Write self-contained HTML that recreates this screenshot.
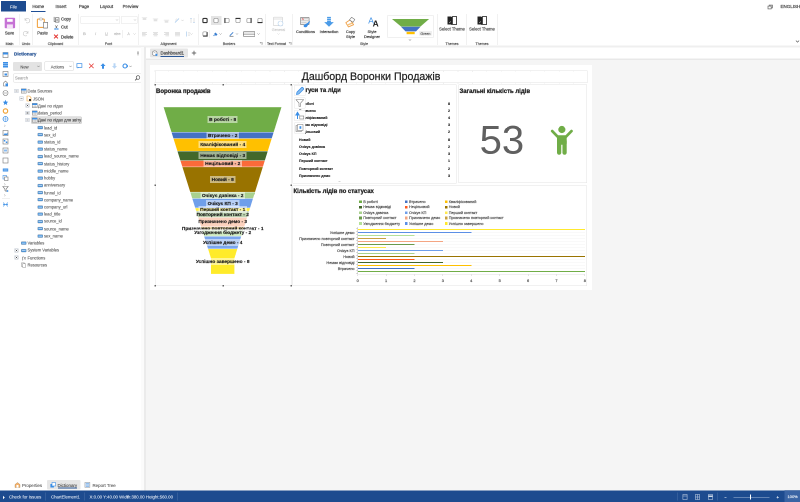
<!DOCTYPE html>
<html><head><meta charset="utf-8">
<style>
*{box-sizing:border-box;margin:0;padding:0}
html,body{width:800px;height:502px;overflow:hidden;background:#fff;font-family:"Liberation Sans",sans-serif;color:#333}
#root{position:absolute;left:0;top:0;width:1600px;height:1004px;transform:scale(0.5);transform-origin:0 0;will-change:transform;overflow:hidden}
.a{position:absolute}
.t{position:absolute;white-space:nowrap}
svg{overflow:visible}
</style></head><body><div id="root">
<div class="a" style="left:2px;top:2px;width:50px;height:21px;background:#1d4b8f;"></div>
<div class="t" style="left:-173px;width:400px;text-align:center;top:9px;font-size:8.6px;color:#fff;font-weight:400;-webkit-text-stroke:0.386px #fff;-webkit-text-stroke:0.1px #fff">File</div>
<div class="t" style="left:-123.6px;width:400px;text-align:center;top:8px;font-size:8.8px;color:#444;font-weight:400;-webkit-text-stroke:0.396px #444;">Home</div>
<div class="a" style="left:62px;top:22px;width:29.2px;height:2px;background:#1f4f96;"></div>
<div class="t" style="left:-78px;width:400px;text-align:center;top:8px;font-size:8.8px;color:#444;font-weight:400;-webkit-text-stroke:0.396px #444;">Insert</div>
<div class="t" style="left:-32px;width:400px;text-align:center;top:8px;font-size:8.8px;color:#444;font-weight:400;-webkit-text-stroke:0.396px #444;">Page</div>
<div class="t" style="left:13px;width:400px;text-align:center;top:8px;font-size:8.8px;color:#444;font-weight:400;-webkit-text-stroke:0.396px #444;">Layout</div>
<div class="t" style="left:61px;width:400px;text-align:center;top:8px;font-size:8.8px;color:#444;font-weight:400;-webkit-text-stroke:0.396px #444;">Preview</div>
<svg class="a" style="left:1535px;top:8.6px;width:12px;height:10px" viewBox="0 0 6 5"><rect x="0.5" y="1.6" width="3.2" height="2.8" fill="#fff" stroke="#666" stroke-width="0.7"/><path d="M1.7 1.4V0.6h3.2v2.8H3.9" fill="none" stroke="#666" stroke-width="0.7"/></svg>
<div class="t" style="left:1561px;top:8px;font-size:9px;color:#444;font-weight:400;-webkit-text-stroke:0.4px #444;">ENGLISH</div>
<div class="a" style="left:0px;top:91.4px;width:1600px;height:3.6px;background:#efefef;"></div>
<div class="a" style="left:39px;top:28px;width:1.2px;height:62px;background:#e2e2e2;"></div>
<div class="a" style="left:64px;top:28px;width:1.2px;height:62px;background:#e2e2e2;"></div>
<div class="a" style="left:156px;top:28px;width:1.2px;height:62px;background:#e2e2e2;"></div>
<div class="a" style="left:276px;top:28px;width:1.2px;height:62px;background:#e2e2e2;"></div>
<div class="a" style="left:396px;top:28px;width:1.2px;height:62px;background:#e2e2e2;"></div>
<div class="a" style="left:530px;top:28px;width:1.2px;height:62px;background:#e2e2e2;"></div>
<div class="a" style="left:585px;top:28px;width:1.2px;height:62px;background:#e2e2e2;"></div>
<div class="a" style="left:874px;top:28px;width:1.2px;height:62px;background:#e2e2e2;"></div>
<div class="a" style="left:933px;top:28px;width:1.2px;height:62px;background:#e2e2e2;"></div>
<div class="a" style="left:994px;top:28px;width:1.2px;height:62px;background:#e2e2e2;"></div>
<div class="t" style="left:-181px;width:400px;text-align:center;top:83px;font-size:7.2px;color:#555;font-weight:400;-webkit-text-stroke:0.324px #555;">Main</div>
<div class="t" style="left:-148px;width:400px;text-align:center;top:83px;font-size:7.2px;color:#555;font-weight:400;-webkit-text-stroke:0.324px #555;">Undo</div>
<div class="t" style="left:-89px;width:400px;text-align:center;top:83px;font-size:7.2px;color:#555;font-weight:400;-webkit-text-stroke:0.324px #555;">Clipboard</div>
<div class="t" style="left:17px;width:400px;text-align:center;top:83px;font-size:7.2px;color:#555;font-weight:400;-webkit-text-stroke:0.324px #555;">Font</div>
<div class="t" style="left:137px;width:400px;text-align:center;top:83px;font-size:7.2px;color:#555;font-weight:400;-webkit-text-stroke:0.324px #555;">Alignment</div>
<div class="t" style="left:258px;width:400px;text-align:center;top:83px;font-size:7.2px;color:#555;font-weight:400;-webkit-text-stroke:0.324px #555;">Borders</div>
<div class="t" style="left:353px;width:400px;text-align:center;top:83px;font-size:7.2px;color:#555;font-weight:400;-webkit-text-stroke:0.324px #555;">Text Format</div>
<div class="t" style="left:528px;width:400px;text-align:center;top:83px;font-size:7.2px;color:#555;font-weight:400;-webkit-text-stroke:0.324px #555;">Style</div>
<div class="t" style="left:704px;width:400px;text-align:center;top:83px;font-size:7.2px;color:#555;font-weight:400;-webkit-text-stroke:0.324px #555;">Themes</div>
<div class="t" style="left:764px;width:400px;text-align:center;top:83px;font-size:7.2px;color:#555;font-weight:400;-webkit-text-stroke:0.324px #555;">Themes</div>
<svg class="a" style="left:519px;top:84px;width:6px;height:6px" viewBox="0 0 3 3"><path d="M0.3 0.3h2.4v2.4M0.5 0.5l2 2" fill="none" stroke="#888" stroke-width="0.5"/></svg>
<svg class="a" style="left:577px;top:84px;width:6px;height:6px" viewBox="0 0 3 3"><path d="M0.3 0.3h2.4v2.4M0.5 0.5l2 2" fill="none" stroke="#888" stroke-width="0.5"/></svg>
<svg class="a" style="left:9px;top:35px;width:22px;height:22px" viewBox="0 0 11 11"><rect x="0.2" y="0.2" width="10.4" height="10.6" rx="0.9" fill="#c672d5"/><rect x="2.6" y="1.6" width="5.6" height="2.7" fill="#fff"/><rect x="2.4" y="6.5" width="6" height="4.3" fill="#f4e3f7"/><rect x="2.4" y="6.5" width="6" height="0.8" fill="#c672d5" opacity="0.5"/></svg>
<div class="t" style="left:-181px;width:400px;text-align:center;top:62px;font-size:8.2px;color:#444;font-weight:400;-webkit-text-stroke:0.368px #444;">Save</div>
<svg class="a" style="left:47px;top:34px;width:12px;height:12px" viewBox="0 0 6 6"><path d="M1.5 1v2.2h2.2M1.7 3.2A2.3 2.3 0 1 1 2.6 5.5" fill="none" stroke="#c7c7c7" stroke-width="0.6"/></svg>
<svg class="a" style="left:47px;top:60px;width:12px;height:12px" viewBox="0 0 6 6"><path d="M4.5 1v2.2H2.3M4.3 3.2A2.3 2.3 0 1 0 3.4 5.5" fill="none" stroke="#c7c7c7" stroke-width="0.6"/></svg>
<svg class="a" style="left:72px;top:34px;width:26px;height:24px" viewBox="0 0 13 12"><rect x="1.4" y="2.1" width="6.9" height="8.3" rx="0.8" fill="#fff" stroke="#f2a545" stroke-width="1.1"/><rect x="3.3" y="1" width="3.1" height="2" rx="0.6" fill="#fff" stroke="#888" stroke-width="0.5"/><rect x="7.4" y="5.3" width="4.3" height="5.8" rx="0.3" fill="#fff" stroke="#666" stroke-width="0.6"/></svg>
<div class="t" style="left:-115px;width:400px;text-align:center;top:62px;font-size:8.2px;color:#444;font-weight:400;-webkit-text-stroke:0.368px #444;">Paste</div>
<svg class="a" style="left:107px;top:32.6px;width:12px;height:12px" viewBox="0 0 6 6"><path d="M0.6 0.4v4.6h1.6" fill="none" stroke="#444" stroke-width="0.55"/><rect x="1.9" y="1.3" width="3.6" height="4.3" fill="#fff" stroke="#444" stroke-width="0.55"/><path d="M2.7 2.8h2M2.7 4.1h2" stroke="#444" stroke-width="0.4"/></svg>
<div class="t" style="left:122px;top:33px;font-size:8.6px;color:#444;font-weight:400;-webkit-text-stroke:0.386px #444;">Copy</div>
<svg class="a" style="left:108px;top:49.6px;width:10px;height:10px" viewBox="0 0 5 5"><path d="M1.2 0.3L3.2 3.3M3.6 0.3L1.6 3.3" stroke="#333" stroke-width="0.5"/><circle cx="1.3" cy="4" r="0.75" fill="none" stroke="#3a8ee6" stroke-width="0.55"/><circle cx="3.5" cy="4" r="0.75" fill="none" stroke="#3a8ee6" stroke-width="0.55"/></svg>
<div class="t" style="left:122px;top:49px;font-size:8.6px;color:#444;font-weight:400;-webkit-text-stroke:0.386px #444;">Cut</div>
<svg class="a" style="left:107px;top:67.6px;width:10px;height:10px" viewBox="0 0 5 5"><path d="M0.6 0.6l3.8 3.8M4.4 0.6l-3.8 3.8" stroke="#e53935" stroke-width="1.05"/></svg>
<div class="t" style="left:122px;top:69px;font-size:8.6px;color:#444;font-weight:400;-webkit-text-stroke:0.386px #444;">Delete</div>
<div class="a" style="left:161px;top:32px;width:79px;height:16px;background:#fff;border:1px solid #e3e3e3;border-radius:2px"></div>
<div class="a" style="left:242px;top:32px;width:33px;height:16px;background:#fff;border:1px solid #e3e3e3;border-radius:2px"></div>
<svg class="a" style="left:231px;top:38px;width:6px;height:4px" viewBox="0 0 3 2"><path d="M0.3 0.3l1.2 1.2l1.2-1.2" fill="none" stroke="#aaa" stroke-width="0.4"/></svg>
<svg class="a" style="left:267px;top:38px;width:6px;height:4px" viewBox="0 0 3 2"><path d="M0.3 0.3l1.2 1.2l1.2-1.2" fill="none" stroke="#aaa" stroke-width="0.4"/></svg>
<div class="t" style="left:-31px;width:400px;text-align:center;top:63px;font-size:8px;color:#c8c8c8;font-weight:400;-webkit-text-stroke:0.36px #c8c8c8;font-weight:700">B</div>
<div class="t" style="left:-9px;width:400px;text-align:center;top:63px;font-size:8px;color:#c8c8c8;font-weight:400;-webkit-text-stroke:0.36px #c8c8c8;font-style:italic">I</div>
<div class="t" style="left:13px;width:400px;text-align:center;top:63px;font-size:8px;color:#c8c8c8;font-weight:400;-webkit-text-stroke:0.36px #c8c8c8;text-decoration:underline">U</div>
<div class="t" style="left:34.6px;width:400px;text-align:center;top:63px;font-size:8px;color:#c8c8c8;font-weight:400;-webkit-text-stroke:0.36px #c8c8c8;text-decoration:line-through">abc</div>
<div class="t" style="left:57px;width:400px;text-align:center;top:63px;font-size:8px;color:#c8c8c8;font-weight:400;-webkit-text-stroke:0.36px #c8c8c8;">A</div>
<div class="a" style="left:245px;top:60px;width:1px;height:16px;background:#e3e3e3;"></div>
<svg class="a" style="left:266px;top:66px;width:6px;height:4px" viewBox="0 0 3 2"><path d="M0.3 0.3l1.2 1.2l1.2-1.2" fill="none" stroke="#bbb" stroke-width="0.4"/></svg>
<svg class="a" style="left:283px;top:35px;width:12px;height:11px" viewBox="0 0 6 5.5"><path d="M0.3 0.20000000000000007h5.4" stroke="#d0d0d0" stroke-width="0.4"/><path d="M1.2 1.2000000000000002h3.6M1.2 2.2h3.6" stroke="#c4c4c4" stroke-width="0.5"/></svg>
<svg class="a" style="left:305px;top:35px;width:12px;height:11px" viewBox="0 0 6 5.5"><path d="M0.3 1.4h5.4" stroke="#d0d0d0" stroke-width="0.4"/><path d="M1.2 2.4h3.6M1.2 3.4h3.6" stroke="#c4c4c4" stroke-width="0.5"/></svg>
<svg class="a" style="left:327px;top:35px;width:12px;height:11px" viewBox="0 0 6 5.5"><path d="M0.3 2.6h5.4" stroke="#d0d0d0" stroke-width="0.4"/><path d="M1.2 3.6h3.6M1.2 4.6h3.6" stroke="#c4c4c4" stroke-width="0.5"/></svg>
<svg class="a" style="left:283px;top:63px;width:12px;height:11px" viewBox="0 0 6 5.5"><path d="M0.5 0.8h5M0.5 2h3.6M0.5 3.2h5M0.5 4.4h3.6" stroke="#c4c4c4" stroke-width="0.5"/></svg>
<svg class="a" style="left:305px;top:63px;width:12px;height:11px" viewBox="0 0 6 5.5"><path d="M0.5 0.8h5M1.2 2h3.6M0.5 3.2h5M1.2 4.4h3.6" stroke="#c4c4c4" stroke-width="0.5"/></svg>
<svg class="a" style="left:327px;top:63px;width:12px;height:11px" viewBox="0 0 6 5.5"><path d="M0.5 0.8h5M1.9 2h3.6M0.5 3.2h5M1.9 4.4h3.6" stroke="#c4c4c4" stroke-width="0.5"/></svg>
<svg class="a" style="left:349px;top:63px;width:12px;height:11px" viewBox="0 0 6 5.5"><path d="M0.5 0.8h5M0.5 2h5M0.5 3.2h5M0.5 4.4h5" stroke="#c4c4c4" stroke-width="0.5"/></svg>
<svg class="a" style="left:349px;top:36px;width:10px;height:10px" viewBox="0 0 5 5"><path d="M0.5 4.5l4-4" stroke="#9cc3ea" stroke-width="0.7"/><path d="M0.6 2.5l2-2" stroke="#bbb" stroke-width="0.4"/></svg>
<svg class="a" style="left:362px;top:39px;width:6px;height:4px" viewBox="0 0 3 2"><path d="M0.3 0.3l1.2 1.2l1.2-1.2" fill="none" stroke="#bbb" stroke-width="0.4"/></svg>
<svg class="a" style="left:380px;top:35px;width:10px;height:12px" viewBox="0 0 5 6"><path d="M1 0.5v5M4 0.5v5" stroke="#c9c9c9" stroke-width="0.5"/><path d="M0.3 1.4L1 0.5l0.7 0.9M3.3 4.6L4 5.5l0.7-0.9" fill="none" stroke="#9cc3ea" stroke-width="0.5"/></svg>
<svg class="a" style="left:371px;top:62px;width:10px;height:12px" viewBox="0 0 5 6"><path d="M1 0.5v5" stroke="#9cc3ea" stroke-width="0.6"/><path d="M2.4 1.8h2.3M2.4 3h2.3M2.4 4.2h2.3" stroke="#c9c9c9" stroke-width="0.4"/></svg>
<svg class="a" style="left:380px;top:66px;width:6px;height:4px" viewBox="0 0 3 2"><path d="M0.3 0.3l1.2 1.2l1.2-1.2" fill="none" stroke="#bbb" stroke-width="0.4"/></svg>
<div class="a" style="left:422px;top:32px;width:21px;height:18px;background:#e4e4e4;"></div>
<svg class="a" style="left:403.6px;top:35px;width:12px;height:12px" viewBox="0 0 6 6"><rect x="0.9" y="0.9" width="4.2" height="4.2" rx="0.9" fill="#fff" stroke="#333" stroke-width="1.1"/></svg>
<svg class="a" style="left:426px;top:35px;width:12px;height:12px" viewBox="0 0 6 6"><rect x="0.9" y="0.9" width="4.2" height="4.2" rx="0.9" fill="#fff" stroke="#777" stroke-width="0.55"/></svg>
<svg class="a" style="left:448px;top:35px;width:12px;height:12px" viewBox="0 0 6 6"><rect x="0.9" y="0.9" width="4.2" height="4.2" rx="0.9" fill="#fff" stroke="#777" stroke-width="0.55"/><path d="M0.9 0.9v4.2" fill="none" stroke="#333" stroke-width="1.1" stroke-linecap="round"/></svg>
<svg class="a" style="left:470px;top:35px;width:12px;height:12px" viewBox="0 0 6 6"><rect x="0.9" y="0.9" width="4.2" height="4.2" rx="0.9" fill="#fff" stroke="#777" stroke-width="0.55"/><path d="M0.9 0.9h4.2" fill="none" stroke="#333" stroke-width="1.1" stroke-linecap="round"/></svg>
<svg class="a" style="left:492px;top:35px;width:12px;height:12px" viewBox="0 0 6 6"><rect x="0.9" y="0.9" width="4.2" height="4.2" rx="0.9" fill="#fff" stroke="#777" stroke-width="0.55"/><path d="M5.1 0.9v4.2" fill="none" stroke="#333" stroke-width="1.1" stroke-linecap="round"/></svg>
<svg class="a" style="left:514px;top:35px;width:12px;height:12px" viewBox="0 0 6 6"><rect x="0.9" y="0.9" width="4.2" height="4.2" rx="0.9" fill="#fff" stroke="#777" stroke-width="0.55"/><path d="M0.9 5.1h4.2" fill="none" stroke="#333" stroke-width="1.1" stroke-linecap="round"/></svg>
<svg class="a" style="left:403.6px;top:62px;width:12px;height:12px" viewBox="0 0 6 6"><rect x="0.9" y="0.9" width="4.2" height="4.2" rx="0.9" fill="#fff" stroke="#777" stroke-width="0.55"/><path d="M5.1 1.5v3.6h-3.6" fill="none" stroke="#333" stroke-width="1.1" stroke-linecap="round"/></svg>
<div class="a" style="left:418px;top:60px;width:1px;height:16px;background:#e3e3e3;"></div>
<svg class="a" style="left:426px;top:63px;width:10px;height:10px" viewBox="0 0 5 5"><path d="M1 2.5l1.5-1.5l2 2l-1.5 1.5z" fill="#3a7fd0"/><circle cx="1" cy="4" r="0.6" fill="#3a7fd0"/></svg>
<svg class="a" style="left:438px;top:66px;width:6px;height:4px" viewBox="0 0 3 2"><path d="M0.3 0.3l1.2 1.2l1.2-1.2" fill="none" stroke="#777" stroke-width="0.4"/></svg>
<svg class="a" style="left:458px;top:63px;width:10px;height:10px" viewBox="0 0 5 5"><path d="M0.8 4.2l3.4-3.4" stroke="#3a7fd0" stroke-width="0.9"/><path d="M0.5 4.7h4" stroke="#333" stroke-width="0.5"/></svg>
<svg class="a" style="left:471px;top:66px;width:6px;height:4px" viewBox="0 0 3 2"><path d="M0.3 0.3l1.2 1.2l1.2-1.2" fill="none" stroke="#777" stroke-width="0.4"/></svg>
<svg class="a" style="left:486px;top:62px;width:24px;height:12px" viewBox="0 0 12 6"><rect x="0.4" y="0.8" width="11.2" height="4.6" rx="0.4" fill="#fff" stroke="#555" stroke-width="0.55"/><path d="M0.4 3.1h11.2" stroke="#555" stroke-width="0.55"/></svg>
<svg class="a" style="left:514px;top:66px;width:6px;height:4px" viewBox="0 0 3 2"><path d="M0.3 0.3l1.2 1.2l1.2-1.2" fill="none" stroke="#777" stroke-width="0.4"/></svg>
<svg class="a" style="left:546px;top:32px;width:22px;height:22px" viewBox="0 0 11 11"><rect x="0.5" y="1.2" width="9" height="8.5" rx="0.5" fill="none" stroke="#cfcfcf" stroke-width="0.6"/><path d="M0.5 3h9" stroke="#cfcfcf" stroke-width="0.6"/><circle cx="7.5" cy="7.5" r="2.5" fill="#fff" stroke="#b7d3ee" stroke-width="0.6"/></svg>
<div class="t" style="left:357px;width:400px;text-align:center;top:55px;font-size:7.6px;color:#cfcfcf;font-weight:400;-webkit-text-stroke:0.342px #cfcfcf;">General</div>
<svg class="a" style="left:554px;top:66px;width:6px;height:4px" viewBox="0 0 3 2"><path d="M0.3 0.3l1.2 1.2l1.2-1.2" fill="none" stroke="#ccc" stroke-width="0.4"/></svg>
<svg class="a" style="left:600px;top:33px;width:22px;height:22px" viewBox="0 0 11 11"><rect x="0.5" y="0.8" width="8.6" height="7.4" rx="0.6" fill="#ececec" stroke="#777" stroke-width="0.6"/><path d="M1.3 2.2h7M1.3 4h7M1.3 5.8h5" stroke="#bbb" stroke-width="0.5"/><path d="M2 3.6l0.8-2l0.8 2" fill="none" stroke="#e05050" stroke-width="0.5"/><path d="M4.5 10.6c-1.2-0.3-1.2-2 0.2-2.6l3-1.6l1.6-1.8l0.8 0.6l-1.4 2.2l-1.6 2.6c-0.6 0.8-1.6 0.9-2.6 0.6z" fill="#3a8ee6"/></svg>
<div class="t" style="left:411px;width:400px;text-align:center;top:59px;font-size:8px;color:#444;font-weight:400;-webkit-text-stroke:0.36px #444;">Conditions</div>
<svg class="a" style="left:647px;top:33px;width:22px;height:22px" viewBox="0 0 11 11"><path d="M3.6 0.4h3.8v1.3H3.6zM3.6 2.2h3.8v1.3H3.6zM3.6 4h3.8v1.6h2.9L5.5 10.3L0.7 5.6h2.9z" fill="#4a9be8"/></svg>
<div class="t" style="left:458px;width:400px;text-align:center;top:59px;font-size:8px;color:#444;font-weight:400;-webkit-text-stroke:0.36px #444;">Interaction</div>
<svg class="a" style="left:690px;top:33px;width:22px;height:22px" viewBox="0 0 11 11"><path d="M0.8 6.2L5.2 3.2L8.6 8.2L3.4 10.4z" fill="#fff" stroke="#f0a24a" stroke-width="0.9" stroke-linejoin="round"/><path d="M2.2 8.6L7.2 6.6" stroke="#f6c27d" stroke-width="1.4"/><path d="M4.4 3.4L6.6 0.8L9.8 3L8 5.8z" fill="#fff" stroke="#777" stroke-width="0.6"/></svg>
<div class="t" style="left:501px;width:400px;text-align:center;top:59px;font-size:8px;color:#444;font-weight:400;-webkit-text-stroke:0.36px #444;">Copy</div>
<div class="t" style="left:501px;width:400px;text-align:center;top:69px;font-size:8px;color:#444;font-weight:400;-webkit-text-stroke:0.36px #444;">Style</div>
<svg class="a" style="left:736px;top:32px;width:26px;height:24px" viewBox="0 0 13 12"><text x="0.3" y="7.6" font-family="Liberation Sans" font-size="8.4" fill="#3a8ee6">A</text><text x="4.6" y="10.6" font-family="Liberation Sans" font-size="8.4" font-weight="700" fill="#222">A</text></svg>
<div class="t" style="left:544px;width:400px;text-align:center;top:59px;font-size:8px;color:#444;font-weight:400;-webkit-text-stroke:0.36px #444;">Style</div>
<div class="t" style="left:544px;width:400px;text-align:center;top:69px;font-size:8px;color:#444;font-weight:400;-webkit-text-stroke:0.36px #444;">Designer</div>
<div class="a" style="left:774.4px;top:30.4px;width:93.6px;height:46px;background:#fff;border:1.2px solid #e2e2e2;border-radius:3px"></div>
<svg class="a" style="left:778px;top:36px;width:84px;height:36px" viewBox="0 0 42 18"><path d="M3 1h37.1L31.5 8.5H12z" fill="#70ad47"/><path d="M12 8.7h19.5L27 13.4H16.5z" fill="#4472c4"/><rect x="17.6" y="13.9" width="8.1" height="2.3" fill="#ffc000"/></svg>
<div class="a" style="left:838px;top:62.4px;width:25.6px;height:8.6px;background:#f0f0f0;"></div>
<div class="t" style="left:650.8px;width:400px;text-align:center;top:63px;font-size:7.2px;color:#666;font-weight:400;-webkit-text-stroke:0.324px #666;">Green</div>
<svg class="a" style="left:817px;top:78px;width:6px;height:4px" viewBox="0 0 3 2"><path d="M0.3 0.3l1.2 1.2l1.2-1.2" fill="none" stroke="#666" stroke-width="0.5"/></svg>
<svg class="a" style="left:894px;top:32px;width:20px;height:20px" viewBox="0 0 10 10"><rect x="0.5" y="0.5" width="4" height="8" fill="#222"/><rect x="5.5" y="0.5" width="4" height="8" fill="#fff" stroke="#222" stroke-width="0.8"/><path d="M4.7 1v8" stroke="#222" stroke-width="0.6"/><path d="M2 7l2-1.5" stroke="#fff" stroke-width="0.5"/></svg>
<div class="t" style="left:704px;width:400px;text-align:center;top:53px;font-size:8.4px;color:#555;font-weight:400;-webkit-text-stroke:0.378px #555;">Select Theme</div>
<svg class="a" style="left:954px;top:32px;width:20px;height:20px" viewBox="0 0 10 10"><rect x="0.5" y="0.5" width="4" height="8" fill="#222"/><rect x="5.5" y="0.5" width="4" height="8" fill="#fff" stroke="#222" stroke-width="0.8"/><path d="M4.7 1v8" stroke="#222" stroke-width="0.6"/><path d="M2 7l2-1.5" stroke="#fff" stroke-width="0.5"/></svg>
<div class="t" style="left:764px;width:400px;text-align:center;top:53px;font-size:8.4px;color:#555;font-weight:400;-webkit-text-stroke:0.378px #555;">Select Theme</div>
<svg class="a" style="left:1591px;top:80px;width:8px;height:6px" viewBox="0 0 4 3"><path d="M0.4 0.6l1.6 1.6l1.6-1.6" fill="none" stroke="#444" stroke-width="0.6"/></svg>
<svg class="a" style="left:5px;top:104px;width:12px;height:13px" viewBox="0 0 6 6.5"><rect x="0.5" y="0.5" width="5" height="5" fill="#fff" stroke="#777" stroke-width="0.6"/><rect x="0.5" y="0.5" width="5" height="2" fill="#3a8ee6"/></svg>
<svg class="a" style="left:5px;top:123px;width:12px;height:13px" viewBox="0 0 6 6.5"><rect x="0.5" y="0.5" width="5" height="5.5" fill="#3a8ee6"/><path d="M0.5 2.3h5M0.5 4.1h5" stroke="#fff" stroke-width="0.4"/></svg>
<svg class="a" style="left:5px;top:142px;width:12px;height:13px" viewBox="0 0 6 6.5"><rect x="0.5" y="0.5" width="5" height="5" fill="#fff" stroke="#777" stroke-width="0.6"/><rect x="2" y="2.5" width="2.5" height="2" fill="#3a8ee6"/></svg>
<svg class="a" style="left:5px;top:161.2px;width:12px;height:13px" viewBox="0 0 6 6.5"><path d="M1 5.5V2.5l2-2l2 2v3z" fill="#fff" stroke="#777" stroke-width="0.6"/><rect x="3" y="3" width="2.5" height="2.8" fill="#3a8ee6"/></svg>
<svg class="a" style="left:5px;top:180px;width:12px;height:13px" viewBox="0 0 6 6.5"><circle cx="3" cy="3" r="2.5" fill="#fff" stroke="#777" stroke-width="0.6"/><path d="M1.5 3h3" stroke="#777" stroke-width="0.5"/></svg>
<svg class="a" style="left:5px;top:199px;width:12px;height:13px" viewBox="0 0 6 6.5"><path d="M3 0.3l0.8 1.8l1.9 0.2l-1.4 1.3l0.4 1.9L3 4.5l-1.7 1l0.4-1.9L0.3 2.3l1.9-0.2z" fill="#3a8ee6"/></svg>
<svg class="a" style="left:5px;top:216px;width:12px;height:13px" viewBox="0 0 6 6.5"><circle cx="3" cy="3" r="2.2" fill="none" stroke="#f0a030" stroke-width="1.1"/></svg>
<svg class="a" style="left:5px;top:232.4px;width:12px;height:13px" viewBox="0 0 6 6.5"><circle cx="3" cy="3" r="2.5" fill="#fff" stroke="#3a8ee6" stroke-width="0.7"/><path d="M0.5 3h5M3 0.5v5" stroke="#3a8ee6" stroke-width="0.4"/></svg>
<svg class="a" style="left:5px;top:260px;width:12px;height:13px" viewBox="0 0 6 6.5"><rect x="0.5" y="0.5" width="5" height="5" fill="#fff" stroke="#777" stroke-width="0.6"/><path d="M1 5l1.5-2l1 1l1.5-1.5V5z" fill="#3a8ee6"/></svg>
<svg class="a" style="left:5px;top:277px;width:12px;height:13px" viewBox="0 0 6 6.5"><rect x="0.5" y="0.5" width="5" height="5" fill="#fff" stroke="#777" stroke-width="0.6"/><path d="M1.3 1.5h1.5v1.5H1.3zM3.3 3h1.5v1.5H3.3z" fill="#3a8ee6"/></svg>
<svg class="a" style="left:5px;top:294.6px;width:12px;height:13px" viewBox="0 0 6 6.5"><rect x="0.5" y="0.5" width="5" height="5" fill="#fff" stroke="#777" stroke-width="0.6"/><rect x="1.5" y="2" width="3" height="2" fill="#3a8ee6" opacity="0.6"/></svg>
<svg class="a" style="left:5px;top:315px;width:12px;height:13px" viewBox="0 0 6 6.5"><rect x="0.5" y="0.5" width="5" height="5" fill="#fff" stroke="#777" stroke-width="0.6"/></svg>
<svg class="a" style="left:5px;top:334px;width:12px;height:13px" viewBox="0 0 6 6.5"><rect x="0.3" y="1.5" width="5.4" height="3" fill="#3a8ee6"/><path d="M1 3h4" stroke="#fff" stroke-width="0.5"/></svg>
<svg class="a" style="left:5px;top:349.6px;width:12px;height:13px" viewBox="0 0 6 6.5"><rect x="0.5" y="0.5" width="3.5" height="3.5" fill="#fff" stroke="#3a8ee6" stroke-width="0.6"/><rect x="2" y="2" width="3.5" height="3.5" fill="#fff" stroke="#777" stroke-width="0.6"/></svg>
<svg class="a" style="left:5px;top:372px;width:12px;height:13px" viewBox="0 0 6 6.5"><path d="M0.3 0.5h5.4L3.6 3v2.5L2.4 4.5V3z" fill="#fff" stroke="#777" stroke-width="0.6"/><circle cx="5" cy="5" r="0.9" fill="#3a8ee6"/></svg>
<svg class="a" style="left:5px;top:402.8px;width:12px;height:13px" viewBox="0 0 6 6.5"><path d="M1 1l1 2l-1 2M5 1L4 3l1 2M0.5 3h5" fill="none" stroke="#3a8ee6" stroke-width="0.7"/></svg>
<svg class="a" style="left:8px;top:248.8px;width:4px;height:6px" viewBox="0 0 2 3"><path d="M0.3 0.3l1 1l-1 1" fill="none" stroke="#777" stroke-width="0.4"/></svg>
<svg class="a" style="left:8px;top:366px;width:4px;height:6px" viewBox="0 0 2 3"><path d="M0.3 0.3l1 1l-1 1" fill="none" stroke="#777" stroke-width="0.4"/></svg>
<svg class="a" style="left:8px;top:388px;width:4px;height:6px" viewBox="0 0 2 3"><path d="M0.3 0.3l1 1l-1 1" fill="none" stroke="#777" stroke-width="0.4"/></svg>
<div class="a" style="left:4px;top:396px;width:16px;height:1px;background:#e0e0e0;"></div>
<div class="t" style="left:28px;top:103px;font-size:9.2px;color:#2b5797;font-weight:700;-webkit-text-stroke:0.4px #2b5797;">Dictionary</div>
<svg class="a" style="left:273px;top:102px;width:6px;height:10px" viewBox="0 0 3 5"><path d="M0.5 3h2M1.5 3v1.7" stroke="#aaa" stroke-width="0.5"/><rect x="0.9" y="0.4" width="1.2" height="2.5" fill="#999"/></svg>
<div class="a" style="left:26px;top:124px;width:58px;height:18px;background:#e3e3e3;border-radius:2px"></div>
<div class="t" style="left:-151px;width:400px;text-align:center;top:130px;font-size:8.2px;color:#505050;font-weight:400;-webkit-text-stroke:0.368px #505050;-webkit-text-stroke:0.16px #505050;">New</div>
<svg class="a" style="left:74px;top:131px;width:6px;height:4px" viewBox="0 0 3 2"><path d="M0.3 0.3l1.2 1.2l1.2-1.2" fill="none" stroke="#555" stroke-width="0.4"/></svg>
<div class="a" style="left:89px;top:123px;width:59px;height:18px;background:#fff;border:1.2px solid #d4d4d4;border-radius:2px"></div>
<div class="t" style="left:-85px;width:400px;text-align:center;top:130px;font-size:8.2px;color:#505050;font-weight:400;-webkit-text-stroke:0.368px #505050;-webkit-text-stroke:0.16px #505050;">Actions</div>
<svg class="a" style="left:138px;top:131px;width:6px;height:4px" viewBox="0 0 3 2"><path d="M0.3 0.3l1.2 1.2l1.2-1.2" fill="none" stroke="#555" stroke-width="0.4"/></svg>
<svg class="a" style="left:153px;top:126px;width:12px;height:12px" viewBox="0 0 6 6"><rect x="0.4" y="0.6" width="5" height="3.8" fill="#fff" stroke="#3a8ee6" stroke-width="0.7"/><path d="M1.5 4.4l-0.5 1.2l1.6-1.2" fill="#3a8ee6"/></svg>
<svg class="a" style="left:177px;top:126px;width:12px;height:12px" viewBox="0 0 6 6"><path d="M0.6 0.6l4.5 4.5M5.1 0.6L0.6 5.1" stroke="#e53935" stroke-width="0.8"/></svg>
<svg class="a" style="left:200px;top:126px;width:12px;height:12px" viewBox="0 0 6 6"><path d="M3 0.3L5.5 3H4v2.7H2V3H0.5z" fill="#3a8ee6"/></svg>
<svg class="a" style="left:223px;top:126px;width:12px;height:12px" viewBox="0 0 6 6"><path d="M3 5.7L5.5 3H4V0.3H2V3H0.5z" fill="#b9d6f5"/></svg>
<svg class="a" style="left:244px;top:126px;width:12px;height:12px" viewBox="0 0 6 6"><circle cx="3" cy="3" r="2" fill="none" stroke="#3a8ee6" stroke-width="1.1"/></svg>
<svg class="a" style="left:258px;top:131px;width:6px;height:4px" viewBox="0 0 3 2"><path d="M0.3 0.3l1.2 1.2l1.2-1.2" fill="none" stroke="#555" stroke-width="0.4"/></svg>
<div class="a" style="left:26px;top:146.6px;width:258px;height:18.6px;background:#fff;border:1.2px solid #dadada;border-radius:3px"></div>
<div class="t" style="left:30px;top:152px;font-size:8.2px;color:#999;font-weight:400;-webkit-text-stroke:0.368px #999;-webkit-text-stroke:0.16px #999;">Search</div>
<svg class="a" style="left:269px;top:150px;width:12px;height:12px" viewBox="0 0 6 6"><circle cx="3.5" cy="2.5" r="1.8" fill="none" stroke="#444" stroke-width="0.6"/><path d="M2.2 3.8L0.6 5.4" stroke="#444" stroke-width="0.8"/></svg>
<svg class="a" style="left:29px;top:178.4px;width:8px;height:8px" viewBox="0 0 4 4"><rect x="0.3" y="0.3" width="3.4" height="3.4" fill="#f4f6f9" stroke="#a9b3c0" stroke-width="0.35"/><path d="M1 2h2" stroke="#555" stroke-width="0.45"/></svg>
<svg class="a" style="left:42px;top:177.4px;width:11px;height:10px" viewBox="0 0 5.5 5"><rect x="0.3" y="0.4" width="4.9" height="4.2" fill="#fff" stroke="#777" stroke-width="0.5"/><rect x="0.3" y="0.4" width="4.9" height="1.6" fill="#3a8ee6"/><path d="M0.5 3.3h4.5M2.1 2v2.6M3.5 2v2.6" stroke="#999" stroke-width="0.3"/></svg>
<div class="t" style="left:55px;top:178px;font-size:8.2px;color:#505050;font-weight:400;-webkit-text-stroke:0.368px #505050;-webkit-text-stroke:0.16px #505050;">Data Sources</div>
<svg class="a" style="left:39px;top:193px;width:8px;height:8px" viewBox="0 0 4 4"><rect x="0.3" y="0.3" width="3.4" height="3.4" fill="#f4f6f9" stroke="#a9b3c0" stroke-width="0.35"/><path d="M1 2h2" stroke="#555" stroke-width="0.45"/></svg>
<svg class="a" style="left:53px;top:191px;width:10px;height:12px" viewBox="0 0 5 6"><path d="M0.5 0.5h2.5l1.5 1.5v3.5h-4z" fill="#fff" stroke="#f0a030" stroke-width="0.6"/><rect x="2.5" y="3.5" width="2" height="2" fill="#333"/></svg>
<div class="t" style="left:66px;top:194px;font-size:8.2px;color:#505050;font-weight:400;-webkit-text-stroke:0.368px #505050;-webkit-text-stroke:0.16px #505050;">JSON</div>
<svg class="a" style="left:51px;top:207.4px;width:8px;height:8px" viewBox="0 0 4 4"><rect x="0.3" y="0.3" width="3.4" height="3.4" fill="#f4f6f9" stroke="#a9b3c0" stroke-width="0.35"/><path d="M1.1 1.1l1.8 1.8M2.9 1.1l-1.8 1.8" stroke="#444" stroke-width="0.5"/></svg>
<svg class="a" style="left:64px;top:206.4px;width:11px;height:10px" viewBox="0 0 5.5 5"><rect x="0.3" y="0.4" width="4.9" height="4.2" fill="#fff" stroke="#777" stroke-width="0.5"/><rect x="0.3" y="0.4" width="4.9" height="1.6" fill="#3a8ee6"/><path d="M0.5 3.3h4.5M2.1 2v2.6M3.5 2v2.6" stroke="#999" stroke-width="0.3"/></svg>
<div class="t" style="left:76px;top:208px;font-size:8.2px;color:#505050;font-weight:400;-webkit-text-stroke:0.368px #505050;-webkit-text-stroke:0.16px #505050;">Дані по лідах</div>
<svg class="a" style="left:51px;top:222px;width:8px;height:8px" viewBox="0 0 4 4"><rect x="0.3" y="0.3" width="3.4" height="3.4" fill="#f4f6f9" stroke="#a9b3c0" stroke-width="0.35"/><path d="M1.1 1.1l1.8 1.8M2.9 1.1l-1.8 1.8" stroke="#444" stroke-width="0.5"/></svg>
<svg class="a" style="left:64px;top:221px;width:11px;height:10px" viewBox="0 0 5.5 5"><rect x="0.3" y="0.4" width="4.9" height="4.2" fill="#fff" stroke="#777" stroke-width="0.5"/><rect x="0.3" y="0.4" width="4.9" height="1.6" fill="#3a8ee6"/><path d="M0.5 3.3h4.5M2.1 2v2.6M3.5 2v2.6" stroke="#999" stroke-width="0.3"/></svg>
<div class="t" style="left:76px;top:222px;font-size:8.2px;color:#505050;font-weight:400;-webkit-text-stroke:0.368px #505050;-webkit-text-stroke:0.16px #505050;">dates_period</div>
<div class="a" style="left:62px;top:233px;width:102px;height:15px;background:#dedede;border-radius:3px;border:1px solid #c8c8c8"></div>
<svg class="a" style="left:51px;top:236.4px;width:8px;height:8px" viewBox="0 0 4 4"><rect x="0.3" y="0.3" width="3.4" height="3.4" fill="#f4f6f9" stroke="#a9b3c0" stroke-width="0.35"/><path d="M1 2h2" stroke="#555" stroke-width="0.45"/></svg>
<svg class="a" style="left:64px;top:235.4px;width:11px;height:10px" viewBox="0 0 5.5 5"><rect x="0.3" y="0.4" width="4.9" height="4.2" fill="#fff" stroke="#777" stroke-width="0.5"/><rect x="0.3" y="0.4" width="4.9" height="1.6" fill="#3a8ee6"/><path d="M0.5 3.3h4.5M2.1 2v2.6M3.5 2v2.6" stroke="#999" stroke-width="0.3"/></svg>
<div class="t" style="left:76px;top:236px;font-size:8.2px;color:#333;font-weight:400;-webkit-text-stroke:0.368px #333;-webkit-text-stroke:0.16px #333;">Дані по лідах для звіту</div>
<svg class="a" style="left:75px;top:251px;width:11px;height:8px" viewBox="0 0 5.5 4"><rect x="0.3" y="0.7" width="4.9" height="2.8" rx="0.4" fill="#4a98e0" stroke="#6b7f95" stroke-width="0.35"/><path d="M1 2.1h3.5" stroke="#fff" stroke-width="0.5"/></svg>
<div class="t" style="left:88px;top:252px;font-size:8.2px;color:#555;font-weight:400;-webkit-text-stroke:0.368px #555;-webkit-text-stroke:0.16px #555;">lead_id</div>
<svg class="a" style="left:75px;top:265.44px;width:11px;height:8px" viewBox="0 0 5.5 4"><rect x="0.3" y="0.7" width="4.9" height="2.8" rx="0.4" fill="#4a98e0" stroke="#6b7f95" stroke-width="0.35"/><path d="M1 2.1h3.5" stroke="#fff" stroke-width="0.5"/></svg>
<div class="t" style="left:88px;top:266px;font-size:8.2px;color:#555;font-weight:400;-webkit-text-stroke:0.368px #555;-webkit-text-stroke:0.16px #555;">sex_id</div>
<svg class="a" style="left:75px;top:279.88px;width:11px;height:8px" viewBox="0 0 5.5 4"><rect x="0.3" y="0.7" width="4.9" height="2.8" rx="0.4" fill="#4a98e0" stroke="#6b7f95" stroke-width="0.35"/><path d="M1 2.1h3.5" stroke="#fff" stroke-width="0.5"/></svg>
<div class="t" style="left:88px;top:280px;font-size:8.2px;color:#555;font-weight:400;-webkit-text-stroke:0.368px #555;-webkit-text-stroke:0.16px #555;">status_id</div>
<svg class="a" style="left:75px;top:294.32px;width:11px;height:8px" viewBox="0 0 5.5 4"><rect x="0.3" y="0.7" width="4.9" height="2.8" rx="0.4" fill="#4a98e0" stroke="#6b7f95" stroke-width="0.35"/><path d="M1 2.1h3.5" stroke="#fff" stroke-width="0.5"/></svg>
<div class="t" style="left:88px;top:294px;font-size:8.2px;color:#555;font-weight:400;-webkit-text-stroke:0.368px #555;-webkit-text-stroke:0.16px #555;">status_name</div>
<svg class="a" style="left:75px;top:308.76px;width:11px;height:8px" viewBox="0 0 5.5 4"><rect x="0.3" y="0.7" width="4.9" height="2.8" rx="0.4" fill="#4a98e0" stroke="#6b7f95" stroke-width="0.35"/><path d="M1 2.1h3.5" stroke="#fff" stroke-width="0.5"/></svg>
<div class="t" style="left:88px;top:308px;font-size:8.2px;color:#555;font-weight:400;-webkit-text-stroke:0.368px #555;-webkit-text-stroke:0.16px #555;">lead_source_name</div>
<svg class="a" style="left:75px;top:323.2px;width:11px;height:8px" viewBox="0 0 5.5 4"><rect x="0.3" y="0.7" width="4.9" height="2.8" rx="0.4" fill="#4a98e0" stroke="#6b7f95" stroke-width="0.35"/><path d="M1 2.1h3.5" stroke="#fff" stroke-width="0.5"/></svg>
<div class="t" style="left:88px;top:324px;font-size:8.2px;color:#555;font-weight:400;-webkit-text-stroke:0.368px #555;-webkit-text-stroke:0.16px #555;">status_history</div>
<svg class="a" style="left:75px;top:337.64px;width:11px;height:8px" viewBox="0 0 5.5 4"><rect x="0.3" y="0.7" width="4.9" height="2.8" rx="0.4" fill="#4a98e0" stroke="#6b7f95" stroke-width="0.35"/><path d="M1 2.1h3.5" stroke="#fff" stroke-width="0.5"/></svg>
<div class="t" style="left:88px;top:338px;font-size:8.2px;color:#555;font-weight:400;-webkit-text-stroke:0.368px #555;-webkit-text-stroke:0.16px #555;">middle_name</div>
<svg class="a" style="left:75px;top:352.08px;width:11px;height:8px" viewBox="0 0 5.5 4"><rect x="0.3" y="0.7" width="4.9" height="2.8" rx="0.4" fill="#4a98e0" stroke="#6b7f95" stroke-width="0.35"/><path d="M1 2.1h3.5" stroke="#fff" stroke-width="0.5"/></svg>
<div class="t" style="left:88px;top:352px;font-size:8.2px;color:#555;font-weight:400;-webkit-text-stroke:0.368px #555;-webkit-text-stroke:0.16px #555;">hobby</div>
<svg class="a" style="left:75px;top:366.52px;width:11px;height:8px" viewBox="0 0 5.5 4"><rect x="0.3" y="0.7" width="4.9" height="2.8" rx="0.4" fill="#4a98e0" stroke="#6b7f95" stroke-width="0.35"/><path d="M1 2.1h3.5" stroke="#fff" stroke-width="0.5"/></svg>
<div class="t" style="left:88px;top:366px;font-size:8.2px;color:#555;font-weight:400;-webkit-text-stroke:0.368px #555;-webkit-text-stroke:0.16px #555;">anniversary</div>
<svg class="a" style="left:75px;top:380.96px;width:11px;height:8px" viewBox="0 0 5.5 4"><rect x="0.3" y="0.7" width="4.9" height="2.8" rx="0.4" fill="#4a98e0" stroke="#6b7f95" stroke-width="0.35"/><path d="M1 2.1h3.5" stroke="#fff" stroke-width="0.5"/></svg>
<div class="t" style="left:88px;top:382px;font-size:8.2px;color:#555;font-weight:400;-webkit-text-stroke:0.368px #555;-webkit-text-stroke:0.16px #555;">funnel_id</div>
<svg class="a" style="left:75px;top:395.4px;width:11px;height:8px" viewBox="0 0 5.5 4"><rect x="0.3" y="0.7" width="4.9" height="2.8" rx="0.4" fill="#4a98e0" stroke="#6b7f95" stroke-width="0.35"/><path d="M1 2.1h3.5" stroke="#fff" stroke-width="0.5"/></svg>
<div class="t" style="left:88px;top:396px;font-size:8.2px;color:#555;font-weight:400;-webkit-text-stroke:0.368px #555;-webkit-text-stroke:0.16px #555;">company_name</div>
<svg class="a" style="left:75px;top:409.84px;width:11px;height:8px" viewBox="0 0 5.5 4"><rect x="0.3" y="0.7" width="4.9" height="2.8" rx="0.4" fill="#4a98e0" stroke="#6b7f95" stroke-width="0.35"/><path d="M1 2.1h3.5" stroke="#fff" stroke-width="0.5"/></svg>
<div class="t" style="left:88px;top:410px;font-size:8.2px;color:#555;font-weight:400;-webkit-text-stroke:0.368px #555;-webkit-text-stroke:0.16px #555;">company_url</div>
<svg class="a" style="left:75px;top:424.28px;width:11px;height:8px" viewBox="0 0 5.5 4"><rect x="0.3" y="0.7" width="4.9" height="2.8" rx="0.4" fill="#4a98e0" stroke="#6b7f95" stroke-width="0.35"/><path d="M1 2.1h3.5" stroke="#fff" stroke-width="0.5"/></svg>
<div class="t" style="left:88px;top:424px;font-size:8.2px;color:#555;font-weight:400;-webkit-text-stroke:0.368px #555;-webkit-text-stroke:0.16px #555;">lead_title</div>
<svg class="a" style="left:75px;top:438.72px;width:11px;height:8px" viewBox="0 0 5.5 4"><rect x="0.3" y="0.7" width="4.9" height="2.8" rx="0.4" fill="#4a98e0" stroke="#6b7f95" stroke-width="0.35"/><path d="M1 2.1h3.5" stroke="#fff" stroke-width="0.5"/></svg>
<div class="t" style="left:88px;top:438px;font-size:8.2px;color:#555;font-weight:400;-webkit-text-stroke:0.368px #555;-webkit-text-stroke:0.16px #555;">source_id</div>
<svg class="a" style="left:75px;top:453.16px;width:11px;height:8px" viewBox="0 0 5.5 4"><rect x="0.3" y="0.7" width="4.9" height="2.8" rx="0.4" fill="#4a98e0" stroke="#6b7f95" stroke-width="0.35"/><path d="M1 2.1h3.5" stroke="#fff" stroke-width="0.5"/></svg>
<div class="t" style="left:88px;top:454px;font-size:8.2px;color:#555;font-weight:400;-webkit-text-stroke:0.368px #555;-webkit-text-stroke:0.16px #555;">source_name</div>
<svg class="a" style="left:75px;top:467.6px;width:11px;height:8px" viewBox="0 0 5.5 4"><rect x="0.3" y="0.7" width="4.9" height="2.8" rx="0.4" fill="#4a98e0" stroke="#6b7f95" stroke-width="0.35"/><path d="M1 2.1h3.5" stroke="#fff" stroke-width="0.5"/></svg>
<div class="t" style="left:88px;top:468px;font-size:8.2px;color:#555;font-weight:400;-webkit-text-stroke:0.368px #555;-webkit-text-stroke:0.16px #555;">sex_name</div>
<svg class="a" style="left:42px;top:482.4px;width:11px;height:8px" viewBox="0 0 5.5 4"><rect x="0.3" y="0.7" width="4.9" height="2.8" rx="0.4" fill="#4a98e0" stroke="#6b7f95" stroke-width="0.35"/><path d="M1 2.1h3.5" stroke="#fff" stroke-width="0.5"/></svg>
<div class="t" style="left:55px;top:482px;font-size:8.2px;color:#505050;font-weight:400;-webkit-text-stroke:0.368px #505050;-webkit-text-stroke:0.16px #505050;">Variables</div>
<svg class="a" style="left:29px;top:496.8px;width:8px;height:8px" viewBox="0 0 4 4"><rect x="0.3" y="0.3" width="3.4" height="3.4" fill="#f4f6f9" stroke="#a9b3c0" stroke-width="0.35"/><path d="M1.1 1.1l1.8 1.8M2.9 1.1l-1.8 1.8" stroke="#444" stroke-width="0.5"/></svg>
<svg class="a" style="left:42px;top:496.8px;width:11px;height:8px" viewBox="0 0 5.5 4"><rect x="0.3" y="0.7" width="4.9" height="2.8" rx="0.4" fill="#4a98e0" stroke="#6b7f95" stroke-width="0.35"/><path d="M1 2.1h3.5" stroke="#fff" stroke-width="0.5"/></svg>
<div class="t" style="left:55px;top:496px;font-size:8.2px;color:#505050;font-weight:400;-webkit-text-stroke:0.368px #505050;-webkit-text-stroke:0.16px #505050;">System Variables</div>
<svg class="a" style="left:29px;top:511.2px;width:8px;height:8px" viewBox="0 0 4 4"><rect x="0.3" y="0.3" width="3.4" height="3.4" fill="#f4f6f9" stroke="#a9b3c0" stroke-width="0.35"/><path d="M1.1 1.1l1.8 1.8M2.9 1.1l-1.8 1.8" stroke="#444" stroke-width="0.5"/></svg>
<div class="t" style="left:43px;top:511px;font-size:8.4px;color:#555;font-weight:400;-webkit-text-stroke:0.378px #555;-webkit-text-stroke:0.16px #555;"><i>ƒx</i></div>
<div class="t" style="left:55px;top:512px;font-size:8.2px;color:#505050;font-weight:400;-webkit-text-stroke:0.368px #505050;-webkit-text-stroke:0.16px #505050;">Functions</div>
<svg class="a" style="left:42px;top:524.6px;width:10px;height:10px" viewBox="0 0 5 5"><rect x="0.4" y="0.4" width="3" height="3.5" fill="#fff" stroke="#777" stroke-width="0.4"/><rect x="1.6" y="1.3" width="3" height="3.5" fill="#fff" stroke="#777" stroke-width="0.4"/></svg>
<div class="t" style="left:55px;top:526px;font-size:8.2px;color:#505050;font-weight:400;-webkit-text-stroke:0.368px #505050;-webkit-text-stroke:0.16px #505050;">Resources</div>
<div class="a" style="left:94px;top:960px;width:67px;height:19px;background:#e6e6e6;border-radius:2px"></div>
<svg class="a" style="left:29px;top:964px;width:12px;height:12px" viewBox="0 0 6 6"><path d="M0.5 5.5V2.5l2.5-2l2.5 2v3z" fill="#f6b26b" stroke="#8a6d3b" stroke-width="0.3"/><rect x="2" y="3" width="2" height="2.5" fill="#fff"/></svg>
<div class="t" style="left:44px;top:966px;font-size:8.8px;color:#555;font-weight:400;-webkit-text-stroke:0.396px #555;-webkit-text-stroke:0.16px #555;">Properties</div>
<svg class="a" style="left:100px;top:964px;width:12px;height:12px" viewBox="0 0 6 6"><rect x="0.4" y="2" width="3.5" height="3.5" fill="#3a8ee6"/><rect x="2" y="0.5" width="3.5" height="3.5" fill="#fff" stroke="#3a8ee6" stroke-width="0.6"/></svg>
<div class="t" style="left:115px;top:966px;font-size:8.8px;color:#444;font-weight:400;-webkit-text-stroke:0.396px #444;-webkit-text-stroke:0.16px #444;">Dictionary</div>
<div class="a" style="left:116px;top:975px;width:38px;height:2px;background:#2b5797;"></div>
<svg class="a" style="left:169px;top:964px;width:12px;height:12px" viewBox="0 0 6 6"><rect x="0.4" y="0.4" width="5" height="5" fill="#cfe2f6" stroke="#888" stroke-width="0.4"/><path d="M1.5 1.5h3M1.5 3h3M1.5 4.5h3" stroke="#3a8ee6" stroke-width="0.4"/></svg>
<div class="t" style="left:185px;top:966px;font-size:8.8px;color:#555;font-weight:400;-webkit-text-stroke:0.396px #555;-webkit-text-stroke:0.16px #555;">Report Tree</div>
<div class="a" style="left:282px;top:94px;width:6px;height:887px;background:#fbfbfb;"></div>
<div class="a" style="left:288px;top:94px;width:4px;height:887px;background:#ebebeb;"></div>
<div class="a" style="left:292px;top:119px;width:1308px;height:862px;background:#f5f5f5;"></div>
<div class="a" style="left:292px;top:117.2px;width:1308px;height:2.8px;background:#e8e8e8;"></div>
<div class="a" style="left:300px;top:96.6px;width:76px;height:18.6px;background:#e6e6e6;border-radius:2px"></div>
<svg class="a" style="left:303px;top:99.6px;width:14px;height:14px" viewBox="0 0 7 7"><circle cx="3.2" cy="3.2" r="2.4" fill="#fff" stroke="#777" stroke-width="0.55"/><path d="M2 3.2l1-1.2l1.3 1.5" fill="none" stroke="#999" stroke-width="0.4"/><circle cx="4.9" cy="4.9" r="1.1" fill="#3a8ee6"/></svg>
<div class="t" style="left:321px;top:101px;font-size:8.6px;color:#444;font-weight:400;-webkit-text-stroke:0.386px #444;">Dashboard1</div>
<div class="a" style="left:321px;top:112px;width:47px;height:2.4px;background:#2b5797;"></div>
<svg class="a" style="left:383px;top:101px;width:10px;height:10px" viewBox="0 0 5 5"><path d="M2.5 0.3v4.4M0.3 2.5h4.4" stroke="#444" stroke-width="0.7"/></svg>
<div class="a" style="left:300px;top:130px;width:883.6px;height:450px;background:#fff;"></div>
<div class="a" style="left:310px;top:141.4px;width:865px;height:25px;background:#fff;border:1.4px solid #e3e3e3"></div>
<div class="a" style="left:310px;top:169px;width:273px;height:402px;background:#fff;border:1.4px solid #e3e3e3"></div>
<div class="a" style="left:585px;top:169px;width:328px;height:198px;background:#fff;border:1.4px solid #e3e3e3"></div>
<div class="a" style="left:917px;top:169px;width:257px;height:197px;background:#fff;border:1.4px solid #e3e3e3"></div>
<div class="a" style="left:585px;top:371px;width:589px;height:201px;background:#fff;border:1.4px solid #e3e3e3"></div>
<div class="a" style="left:308.08px;top:140.6px;width:1.2px;height:2.4px;background:#e0e0e0;"></div>
<div class="a" style="left:308.08px;top:165px;width:1.2px;height:2.4px;background:#e0e0e0;"></div>
<div class="a" style="left:337px;top:140.6px;width:1.2px;height:2.4px;background:#e0e0e0;"></div>
<div class="a" style="left:337px;top:165px;width:1.2px;height:2.4px;background:#e0e0e0;"></div>
<div class="a" style="left:365.92px;top:140.6px;width:1.2px;height:2.4px;background:#e0e0e0;"></div>
<div class="a" style="left:365.92px;top:165px;width:1.2px;height:2.4px;background:#e0e0e0;"></div>
<div class="a" style="left:394.84px;top:140.6px;width:1.2px;height:2.4px;background:#e0e0e0;"></div>
<div class="a" style="left:394.84px;top:165px;width:1.2px;height:2.4px;background:#e0e0e0;"></div>
<div class="a" style="left:423.76px;top:140.6px;width:1.2px;height:2.4px;background:#e0e0e0;"></div>
<div class="a" style="left:423.76px;top:165px;width:1.2px;height:2.4px;background:#e0e0e0;"></div>
<div class="a" style="left:452.68px;top:140.6px;width:1.2px;height:2.4px;background:#e0e0e0;"></div>
<div class="a" style="left:452.68px;top:165px;width:1.2px;height:2.4px;background:#e0e0e0;"></div>
<div class="a" style="left:481.6px;top:140.6px;width:1.2px;height:2.4px;background:#e0e0e0;"></div>
<div class="a" style="left:481.6px;top:165px;width:1.2px;height:2.4px;background:#e0e0e0;"></div>
<div class="a" style="left:510.52px;top:140.6px;width:1.2px;height:2.4px;background:#e0e0e0;"></div>
<div class="a" style="left:510.52px;top:165px;width:1.2px;height:2.4px;background:#e0e0e0;"></div>
<div class="a" style="left:539.44px;top:140.6px;width:1.2px;height:2.4px;background:#e0e0e0;"></div>
<div class="a" style="left:539.44px;top:165px;width:1.2px;height:2.4px;background:#e0e0e0;"></div>
<div class="a" style="left:568.36px;top:140.6px;width:1.2px;height:2.4px;background:#e0e0e0;"></div>
<div class="a" style="left:568.36px;top:165px;width:1.2px;height:2.4px;background:#e0e0e0;"></div>
<div class="a" style="left:597.28px;top:140.6px;width:1.2px;height:2.4px;background:#e0e0e0;"></div>
<div class="a" style="left:597.28px;top:165px;width:1.2px;height:2.4px;background:#e0e0e0;"></div>
<div class="a" style="left:626.2px;top:140.6px;width:1.2px;height:2.4px;background:#e0e0e0;"></div>
<div class="a" style="left:626.2px;top:165px;width:1.2px;height:2.4px;background:#e0e0e0;"></div>
<div class="a" style="left:655.12px;top:140.6px;width:1.2px;height:2.4px;background:#e0e0e0;"></div>
<div class="a" style="left:655.12px;top:165px;width:1.2px;height:2.4px;background:#e0e0e0;"></div>
<div class="a" style="left:684.04px;top:140.6px;width:1.2px;height:2.4px;background:#e0e0e0;"></div>
<div class="a" style="left:684.04px;top:165px;width:1.2px;height:2.4px;background:#e0e0e0;"></div>
<div class="a" style="left:712.96px;top:140.6px;width:1.2px;height:2.4px;background:#e0e0e0;"></div>
<div class="a" style="left:712.96px;top:165px;width:1.2px;height:2.4px;background:#e0e0e0;"></div>
<div class="a" style="left:741.88px;top:140.6px;width:1.2px;height:2.4px;background:#e0e0e0;"></div>
<div class="a" style="left:741.88px;top:165px;width:1.2px;height:2.4px;background:#e0e0e0;"></div>
<div class="a" style="left:770.8px;top:140.6px;width:1.2px;height:2.4px;background:#e0e0e0;"></div>
<div class="a" style="left:770.8px;top:165px;width:1.2px;height:2.4px;background:#e0e0e0;"></div>
<div class="a" style="left:799.72px;top:140.6px;width:1.2px;height:2.4px;background:#e0e0e0;"></div>
<div class="a" style="left:799.72px;top:165px;width:1.2px;height:2.4px;background:#e0e0e0;"></div>
<div class="a" style="left:828.64px;top:140.6px;width:1.2px;height:2.4px;background:#e0e0e0;"></div>
<div class="a" style="left:828.64px;top:165px;width:1.2px;height:2.4px;background:#e0e0e0;"></div>
<div class="a" style="left:857.56px;top:140.6px;width:1.2px;height:2.4px;background:#e0e0e0;"></div>
<div class="a" style="left:857.56px;top:165px;width:1.2px;height:2.4px;background:#e0e0e0;"></div>
<div class="a" style="left:886.48px;top:140.6px;width:1.2px;height:2.4px;background:#e0e0e0;"></div>
<div class="a" style="left:886.48px;top:165px;width:1.2px;height:2.4px;background:#e0e0e0;"></div>
<div class="a" style="left:915.4px;top:140.6px;width:1.2px;height:2.4px;background:#e0e0e0;"></div>
<div class="a" style="left:915.4px;top:165px;width:1.2px;height:2.4px;background:#e0e0e0;"></div>
<div class="a" style="left:944.32px;top:140.6px;width:1.2px;height:2.4px;background:#e0e0e0;"></div>
<div class="a" style="left:944.32px;top:165px;width:1.2px;height:2.4px;background:#e0e0e0;"></div>
<div class="a" style="left:973.24px;top:140.6px;width:1.2px;height:2.4px;background:#e0e0e0;"></div>
<div class="a" style="left:973.24px;top:165px;width:1.2px;height:2.4px;background:#e0e0e0;"></div>
<div class="a" style="left:1002.16px;top:140.6px;width:1.2px;height:2.4px;background:#e0e0e0;"></div>
<div class="a" style="left:1002.16px;top:165px;width:1.2px;height:2.4px;background:#e0e0e0;"></div>
<div class="a" style="left:1031.08px;top:140.6px;width:1.2px;height:2.4px;background:#e0e0e0;"></div>
<div class="a" style="left:1031.08px;top:165px;width:1.2px;height:2.4px;background:#e0e0e0;"></div>
<div class="a" style="left:1060px;top:140.6px;width:1.2px;height:2.4px;background:#e0e0e0;"></div>
<div class="a" style="left:1060px;top:165px;width:1.2px;height:2.4px;background:#e0e0e0;"></div>
<div class="a" style="left:1088.92px;top:140.6px;width:1.2px;height:2.4px;background:#e0e0e0;"></div>
<div class="a" style="left:1088.92px;top:165px;width:1.2px;height:2.4px;background:#e0e0e0;"></div>
<div class="a" style="left:1117.84px;top:140.6px;width:1.2px;height:2.4px;background:#e0e0e0;"></div>
<div class="a" style="left:1117.84px;top:165px;width:1.2px;height:2.4px;background:#e0e0e0;"></div>
<div class="a" style="left:1146.76px;top:140.6px;width:1.2px;height:2.4px;background:#e0e0e0;"></div>
<div class="a" style="left:1146.76px;top:165px;width:1.2px;height:2.4px;background:#e0e0e0;"></div>
<div class="t" style="left:542px;width:400px;text-align:center;top:141px;font-size:21.2px;color:#222;font-weight:400;-webkit-text-stroke:0.4px #222;">Дашборд Воронки Продажів</div>
<div class="a" style="left:308.5px;top:167.5px;width:3px;height:3px;background:#666;"></div>
<div class="a" style="left:444.5px;top:167.5px;width:3px;height:3px;background:#666;"></div>
<div class="a" style="left:580.5px;top:167.5px;width:3px;height:3px;background:#666;"></div>
<div class="a" style="left:308.5px;top:368.5px;width:3px;height:3px;background:#666;"></div>
<div class="a" style="left:580.5px;top:368.5px;width:3px;height:3px;background:#666;"></div>
<div class="a" style="left:308.5px;top:569.5px;width:3px;height:3px;background:#666;"></div>
<div class="a" style="left:444.5px;top:569.5px;width:3px;height:3px;background:#666;"></div>
<div class="a" style="left:580.5px;top:569.5px;width:3px;height:3px;background:#666;"></div>
<div class="t" style="left:312px;top:175px;font-size:12px;color:#262626;font-weight:700;-webkit-text-stroke:0.4px #262626;-webkit-text-stroke:0.52px #262626">Воронка продажів</div>
<svg class="a" style="left:316px;top:213.6px;width:260px;height:336.218px" viewBox="0 0 130 168.109"><defs><clipPath id="fc"><polygon points="5.599999999999994,0 123.5,0 76.4,151.20 76.4,167.11 53,167.11 53,151.20"/></clipPath></defs><g clip-path="url(#fc)"><rect x="0" y="0.20" width="130" height="24.82" fill="#70ad47"/><rect x="0" y="25.42" width="130" height="5.91" fill="#4472c4"/><rect x="0" y="31.73" width="130" height="12.21" fill="#ffc000"/><rect x="0" y="44.34" width="130" height="9.06" fill="#43682b"/><rect x="0" y="53.80" width="130" height="5.91" fill="#fb6a3a"/><rect x="0" y="60.11" width="130" height="24.82" fill="#997300"/><rect x="0" y="85.33" width="130" height="5.91" fill="#a9d18e"/><rect x="0" y="91.64" width="130" height="9.06" fill="#6f9fea"/><rect x="0" y="101.10" width="130" height="2.75" fill="#ffec3d"/><rect x="0" y="104.25" width="130" height="5.91" fill="#7aa862"/><rect x="0" y="110.56" width="130" height="9.06" fill="#f8a57c"/><rect x="0" y="120.01" width="130" height="2.75" fill="#d2ac4a"/><rect x="0" y="123.17" width="130" height="5.91" fill="#a6dc8a"/><rect x="0" y="129.47" width="130" height="12.21" fill="#7aa6ee"/><rect x="0" y="142.08" width="130" height="24.82" fill="#ffeb2a"/></g></svg>
<div class="t" style="left:245.4px;width:400px;text-align:center;top:233px;font-size:9.6px;font-weight:700;color:#1a1a1a;-webkit-text-stroke:0.28px #1a1a1a"><span style="background:rgba(255,255,255,0.5);padding:1.2px 3px 1.8px">В роботі - 8</span></div>
<div class="t" style="left:245.4px;width:400px;text-align:center;top:265px;font-size:9.6px;font-weight:700;color:#1a1a1a;-webkit-text-stroke:0.28px #1a1a1a"><span style="background:rgba(255,255,255,0.5);padding:1.2px 3px 1.8px">Втрачено - 2</span></div>
<div class="t" style="left:245.4px;width:400px;text-align:center;top:283px;font-size:9.6px;font-weight:700;color:#1a1a1a;-webkit-text-stroke:0.28px #1a1a1a"><span style="background:rgba(255,255,255,0.5);padding:1.2px 3px 1.8px">Кваліфікований - 4</span></div>
<div class="t" style="left:245.4px;width:400px;text-align:center;top:305px;font-size:9.6px;font-weight:700;color:#1a1a1a;-webkit-text-stroke:0.28px #1a1a1a"><span style="background:rgba(255,255,255,0.5);padding:1.2px 3px 1.8px">Немає відповіді - 3</span></div>
<div class="t" style="left:245.4px;width:400px;text-align:center;top:321px;font-size:9.6px;font-weight:700;color:#1a1a1a;-webkit-text-stroke:0.28px #1a1a1a"><span style="background:rgba(255,255,255,0.5);padding:1.2px 3px 1.8px">Нецільовий - 2</span></div>
<div class="t" style="left:245.4px;width:400px;text-align:center;top:353px;font-size:9.6px;font-weight:700;color:#1a1a1a;-webkit-text-stroke:0.28px #1a1a1a"><span style="background:rgba(255,255,255,0.5);padding:1.2px 3px 1.8px">Новий - 8</span></div>
<div class="t" style="left:245.4px;width:400px;text-align:center;top:385px;font-size:9.6px;font-weight:700;color:#1a1a1a;-webkit-text-stroke:0.28px #1a1a1a"><span style="background:rgba(255,255,255,0.5);padding:1.2px 3px 1.8px">Очікує дзвінка - 2</span></div>
<div class="t" style="left:245.4px;width:400px;text-align:center;top:401px;font-size:9.6px;font-weight:700;color:#1a1a1a;-webkit-text-stroke:0.28px #1a1a1a"><span style="background:rgba(255,255,255,0.5);padding:1.2px 3px 1.8px">Очікує КП - 3</span></div>
<div class="t" style="left:245.4px;width:400px;text-align:center;top:413px;font-size:9.6px;font-weight:700;color:#1a1a1a;-webkit-text-stroke:0.28px #1a1a1a"><span style="background:rgba(255,255,255,0.5);padding:1.2px 3px 1.8px">Перший контакт - 1</span></div>
<div class="t" style="left:245.4px;width:400px;text-align:center;top:423px;font-size:9.6px;font-weight:700;color:#1a1a1a;-webkit-text-stroke:0.28px #1a1a1a"><span style="background:rgba(255,255,255,0.5);padding:1.2px 3px 1.8px">Повторний контакт - 2</span></div>
<div class="t" style="left:245.4px;width:400px;text-align:center;top:437px;font-size:9.6px;font-weight:700;color:#1a1a1a;-webkit-text-stroke:0.28px #1a1a1a"><span style="background:rgba(255,255,255,0.5);padding:1.2px 3px 1.8px">Призначено демо - 3</span></div>
<div class="t" style="left:245.4px;width:400px;text-align:center;top:451px;font-size:9.6px;font-weight:700;color:#1a1a1a;-webkit-text-stroke:0.28px #1a1a1a"><span style="background:rgba(255,255,255,0.5);padding:1.2px 3px 1.8px">Призначено повторний контакт - 1</span></div>
<div class="t" style="left:245.4px;width:400px;text-align:center;top:459px;font-size:9.6px;font-weight:700;color:#1a1a1a;-webkit-text-stroke:0.28px #1a1a1a"><span style="background:rgba(255,255,255,0.5);padding:1.2px 3px 1.8px">Узгодження бюджету - 2</span></div>
<div class="t" style="left:245.4px;width:400px;text-align:center;top:479px;font-size:9.6px;font-weight:700;color:#1a1a1a;-webkit-text-stroke:0.28px #1a1a1a"><span style="background:rgba(255,255,255,0.5);padding:1.2px 3px 1.8px">Успішне демо - 4</span></div>
<div class="t" style="left:245.4px;width:400px;text-align:center;top:517px;font-size:9.6px;font-weight:700;color:#1a1a1a;-webkit-text-stroke:0.28px #1a1a1a"><span style="background:rgba(255,255,255,0.5);padding:1.2px 3px 1.8px">Успішно завершено - 8</span></div>
<div class="t" style="left:611px;top:173px;font-size:12px;color:#262626;font-weight:700;-webkit-text-stroke:0.4px #262626;-webkit-text-stroke:0.52px #262626">гуси та ліди</div>
<div class="a" style="left:586px;top:192px;width:326px;height:171.4px;overflow:hidden">
<div class="t" style="left:12px;top:11px;font-size:7.2px;font-weight:700;color:#1a1a1a;-webkit-text-stroke:0.24px #1a1a1a">В роботі</div>
<div class="t" style="left:310px;top:11px;font-size:7.2px;font-weight:700;color:#1a1a1a;-webkit-text-stroke:0.24px #1a1a1a">8</div>
<div class="t" style="left:12px;top:25px;font-size:7.2px;font-weight:700;color:#1a1a1a;-webkit-text-stroke:0.24px #1a1a1a">Втрачено</div>
<div class="t" style="left:310px;top:25px;font-size:7.2px;font-weight:700;color:#1a1a1a;-webkit-text-stroke:0.24px #1a1a1a">2</div>
<div class="t" style="left:12px;top:39px;font-size:7.2px;font-weight:700;color:#1a1a1a;-webkit-text-stroke:0.24px #1a1a1a">Кваліфікований</div>
<div class="t" style="left:310px;top:39px;font-size:7.2px;font-weight:700;color:#1a1a1a;-webkit-text-stroke:0.24px #1a1a1a">4</div>
<div class="t" style="left:12px;top:53px;font-size:7.2px;font-weight:700;color:#1a1a1a;-webkit-text-stroke:0.24px #1a1a1a">Немає відповіді</div>
<div class="t" style="left:310px;top:53px;font-size:7.2px;font-weight:700;color:#1a1a1a;-webkit-text-stroke:0.24px #1a1a1a">3</div>
<div class="t" style="left:12px;top:67px;font-size:7.2px;font-weight:700;color:#1a1a1a;-webkit-text-stroke:0.24px #1a1a1a">Нецільовий</div>
<div class="t" style="left:310px;top:67px;font-size:7.2px;font-weight:700;color:#1a1a1a;-webkit-text-stroke:0.24px #1a1a1a">2</div>
<div class="t" style="left:12px;top:83px;font-size:7.2px;font-weight:700;color:#1a1a1a;-webkit-text-stroke:0.24px #1a1a1a">Новий</div>
<div class="t" style="left:310px;top:83px;font-size:7.2px;font-weight:700;color:#1a1a1a;-webkit-text-stroke:0.24px #1a1a1a">8</div>
<div class="t" style="left:12px;top:97px;font-size:7.2px;font-weight:700;color:#1a1a1a;-webkit-text-stroke:0.24px #1a1a1a">Очікує дзвінка</div>
<div class="t" style="left:310px;top:97px;font-size:7.2px;font-weight:700;color:#1a1a1a;-webkit-text-stroke:0.24px #1a1a1a">2</div>
<div class="t" style="left:12px;top:111px;font-size:7.2px;font-weight:700;color:#1a1a1a;-webkit-text-stroke:0.24px #1a1a1a">Очікує КП</div>
<div class="t" style="left:310px;top:111px;font-size:7.2px;font-weight:700;color:#1a1a1a;-webkit-text-stroke:0.24px #1a1a1a">3</div>
<div class="t" style="left:12px;top:125px;font-size:7.2px;font-weight:700;color:#1a1a1a;-webkit-text-stroke:0.24px #1a1a1a">Перший контакт</div>
<div class="t" style="left:310px;top:125px;font-size:7.2px;font-weight:700;color:#1a1a1a;-webkit-text-stroke:0.24px #1a1a1a">1</div>
<div class="t" style="left:12px;top:141px;font-size:7.2px;font-weight:700;color:#1a1a1a;-webkit-text-stroke:0.24px #1a1a1a">Повторний контакт</div>
<div class="t" style="left:310px;top:141px;font-size:7.2px;font-weight:700;color:#1a1a1a;-webkit-text-stroke:0.24px #1a1a1a">2</div>
<div class="t" style="left:12px;top:155px;font-size:7.2px;font-weight:700;color:#1a1a1a;-webkit-text-stroke:0.24px #1a1a1a">Призначено демо</div>
<div class="t" style="left:310px;top:155px;font-size:7.2px;font-weight:700;color:#1a1a1a;-webkit-text-stroke:0.24px #1a1a1a">3</div>
<div class="t" style="left:12px;top:169px;font-size:7.2px;font-weight:700;color:#1a1a1a;-webkit-text-stroke:0.24px #1a1a1a">Призначено повторний контакт</div>
<div class="t" style="left:310px;top:169px;font-size:7.2px;font-weight:700;color:#1a1a1a;-webkit-text-stroke:0.24px #1a1a1a">1</div>
</div>
<div class="a" style="left:588px;top:170px;width:23px;height:22px;background:#fff;border:1px solid #e6e6e6;border-radius:2px"></div>
<div class="a" style="left:588px;top:195px;width:23px;height:22px;background:#fff;border:1px solid #e6e6e6;border-radius:2px"></div>
<div class="a" style="left:588px;top:220px;width:23px;height:22px;background:#fff;border:1px solid #e6e6e6;border-radius:2px"></div>
<div class="a" style="left:588px;top:245px;width:23px;height:22px;background:#fff;border:1px solid #e6e6e6;border-radius:2px"></div>
<svg class="a" style="left:591px;top:172.6px;width:18px;height:18px" viewBox="0 0 9 9"><path d="M1 8l0.5-2.3L6 1.2a1 1 0 0 1 1.4 0l0.4 0.4a1 1 0 0 1 0 1.4L3.3 7.5z" fill="#8cc0f0" stroke="#3a8ee6" stroke-width="0.8" stroke-linejoin="round"/></svg>
<svg class="a" style="left:591px;top:197.6px;width:18px;height:16px" viewBox="0 0 9 8"><path d="M0.4 0.6H8.2L5.1 4.1V7.4H3.5V4.1Z" fill="#fff" stroke="#777" stroke-width="0.55" stroke-linejoin="round"/></svg>
<svg class="a" style="left:591px;top:223px;width:18px;height:16px" viewBox="0 0 9 8"><path d="M2 7.5V2.5M0.4 3.5L2 0.8L3.6 3.5z" stroke="#3a8ee6" stroke-width="1" fill="#3a8ee6"/><rect x="4.3" y="4.5" width="4" height="3" fill="#fff" stroke="#666" stroke-width="0.5"/></svg>
<svg class="a" style="left:591px;top:248px;width:16px;height:16px" viewBox="0 0 8 8"><rect x="0.5" y="1.5" width="5.5" height="6" fill="#eee" stroke="#777" stroke-width="0.5"/><rect x="2" y="0.5" width="5.5" height="6" fill="#fff" stroke="#777" stroke-width="0.5"/><rect x="4" y="2.2" width="1.8" height="2.6" fill="#3a8ee6"/></svg>
<div class="t" style="left:919px;top:175px;font-size:12px;color:#262626;font-weight:700;-webkit-text-stroke:0.4px #262626;-webkit-text-stroke:0.52px #262626">Загальні кількість лідів</div>
<div class="t" style="left:959.2px;top:234px;font-size:80px;color:#606060;font-weight:400;-webkit-text-stroke:0.4px #606060;-webkit-text-stroke:0">53</div>
<svg class="a" style="left:1096px;top:248px;width:56px;height:68px" viewBox="0 0 28 34"><g fill="#70ad47"><circle cx="13.85" cy="5.5" r="3.6"/><rect x="9" y="11.2" width="9.7" height="9.5" rx="1.6"/><rect x="9" y="15" width="4.25" height="15.8" rx="2.1"/><rect x="14.45" y="15" width="4.25" height="15.8" rx="2.1"/></g><path d="M4.2 7.1L9.8 12.8M23.5 7.1L17.9 12.8" stroke="#70ad47" stroke-width="2.7" stroke-linecap="round"/></svg>
<div class="t" style="left:587px;top:375px;font-size:12px;color:#262626;font-weight:700;-webkit-text-stroke:0.4px #262626;-webkit-text-stroke:0.52px #262626">Кількість лідів по статусах</div>
<div class="a" style="left:718.4px;top:400.7px;width:5.4px;height:5.4px;background:#70ad47;"></div>
<div class="t" style="left:726.4px;top:399px;font-size:7.6px;color:#555;font-weight:400;-webkit-text-stroke:0.342px #555;">В роботі</div>
<div class="a" style="left:810px;top:400.7px;width:5.4px;height:5.4px;background:#4472c4;"></div>
<div class="t" style="left:818px;top:399px;font-size:7.6px;color:#555;font-weight:400;-webkit-text-stroke:0.342px #555;">Втрачено</div>
<div class="a" style="left:889.6px;top:400.7px;width:5.4px;height:5.4px;background:#ffc000;"></div>
<div class="t" style="left:897.6px;top:399px;font-size:7.6px;color:#555;font-weight:400;-webkit-text-stroke:0.342px #555;">Кваліфікований</div>
<div class="a" style="left:718.4px;top:411.6px;width:5.4px;height:5.4px;background:#43682b;"></div>
<div class="t" style="left:726.4px;top:409px;font-size:7.6px;color:#555;font-weight:400;-webkit-text-stroke:0.342px #555;">Немає відповіді</div>
<div class="a" style="left:810px;top:411.6px;width:5.4px;height:5.4px;background:#ff5a1f;"></div>
<div class="t" style="left:818px;top:409px;font-size:7.6px;color:#555;font-weight:400;-webkit-text-stroke:0.342px #555;">Нецільовий</div>
<div class="a" style="left:889.6px;top:411.6px;width:5.4px;height:5.4px;background:#997300;"></div>
<div class="t" style="left:897.6px;top:409px;font-size:7.6px;color:#555;font-weight:400;-webkit-text-stroke:0.342px #555;">Новий</div>
<div class="a" style="left:718.4px;top:422.5px;width:5.4px;height:5.4px;background:#a9d18e;"></div>
<div class="t" style="left:726.4px;top:421px;font-size:7.6px;color:#555;font-weight:400;-webkit-text-stroke:0.342px #555;">Очікує дзвінка</div>
<div class="a" style="left:810px;top:422.5px;width:5.4px;height:5.4px;background:#6d9eeb;"></div>
<div class="t" style="left:818px;top:421px;font-size:7.6px;color:#555;font-weight:400;-webkit-text-stroke:0.342px #555;">Очікує КП</div>
<div class="a" style="left:889.6px;top:422.5px;width:5.4px;height:5.4px;background:#ffe94d;"></div>
<div class="t" style="left:897.6px;top:421px;font-size:7.6px;color:#555;font-weight:400;-webkit-text-stroke:0.342px #555;">Перший контакт</div>
<div class="a" style="left:718.4px;top:433.4px;width:5.4px;height:5.4px;background:#6a9a4a;"></div>
<div class="t" style="left:726.4px;top:431px;font-size:7.6px;color:#555;font-weight:400;-webkit-text-stroke:0.342px #555;">Повторний контакт</div>
<div class="a" style="left:810px;top:433.4px;width:5.4px;height:5.4px;background:#f4a582;"></div>
<div class="t" style="left:818px;top:431px;font-size:7.6px;color:#555;font-weight:400;-webkit-text-stroke:0.342px #555;">Призначено демо</div>
<div class="a" style="left:889.6px;top:433.4px;width:5.4px;height:5.4px;background:#c8a040;"></div>
<div class="t" style="left:897.6px;top:431px;font-size:7.6px;color:#555;font-weight:400;-webkit-text-stroke:0.342px #555;">Призначено повторний контакт</div>
<div class="a" style="left:718.4px;top:444.3px;width:5.4px;height:5.4px;background:#b4e09a;"></div>
<div class="t" style="left:726.4px;top:443px;font-size:7.6px;color:#555;font-weight:400;-webkit-text-stroke:0.342px #555;">Узгодження бюджету</div>
<div class="a" style="left:810px;top:444.3px;width:5.4px;height:5.4px;background:#5b8fe6;"></div>
<div class="t" style="left:818px;top:443px;font-size:7.6px;color:#555;font-weight:400;-webkit-text-stroke:0.342px #555;">Успішне демо</div>
<div class="a" style="left:889.6px;top:444.3px;width:5.4px;height:5.4px;background:#ffe92e;"></div>
<div class="t" style="left:897.6px;top:443px;font-size:7.6px;color:#555;font-weight:400;-webkit-text-stroke:0.342px #555;">Успішно завершено</div>
<div class="a" style="left:715.4px;top:458.5px;width:454.24px;height:1px;background:#f3f3f3;"></div>
<div class="a" style="left:715.4px;top:464.5px;width:454.24px;height:1px;background:#f3f3f3;"></div>
<div class="a" style="left:715.4px;top:470.5px;width:454.24px;height:1px;background:#f3f3f3;"></div>
<div class="a" style="left:715.4px;top:476.5px;width:454.24px;height:1px;background:#f3f3f3;"></div>
<div class="a" style="left:715.4px;top:482.5px;width:454.24px;height:1px;background:#f3f3f3;"></div>
<div class="a" style="left:715.4px;top:488.5px;width:454.24px;height:1px;background:#f3f3f3;"></div>
<div class="a" style="left:715.4px;top:494.5px;width:454.24px;height:1px;background:#f3f3f3;"></div>
<div class="a" style="left:715.4px;top:500.5px;width:454.24px;height:1px;background:#f3f3f3;"></div>
<div class="a" style="left:715.4px;top:506.5px;width:454.24px;height:1px;background:#f3f3f3;"></div>
<div class="a" style="left:715.4px;top:512.5px;width:454.24px;height:1px;background:#f3f3f3;"></div>
<div class="a" style="left:715.4px;top:518.5px;width:454.24px;height:1px;background:#f3f3f3;"></div>
<div class="a" style="left:715.4px;top:524.5px;width:454.24px;height:1px;background:#f3f3f3;"></div>
<div class="a" style="left:715.4px;top:530.5px;width:454.24px;height:1px;background:#f3f3f3;"></div>
<div class="a" style="left:715.4px;top:536.5px;width:454.24px;height:1px;background:#f3f3f3;"></div>
<div class="a" style="left:715.4px;top:542.5px;width:454.24px;height:1px;background:#f3f3f3;"></div>
<div class="a" style="left:715.4px;top:457.7px;width:454.24px;height:2.6px;background:#ffe92e;"></div>
<div class="a" style="left:715.4px;top:463.7px;width:227.12px;height:2.6px;background:#5b8fe6;"></div>
<div class="a" style="left:715.4px;top:469.7px;width:113.56px;height:2.6px;background:#b4e09a;"></div>
<div class="a" style="left:715.4px;top:475.7px;width:56.78px;height:2.6px;background:#c8a040;"></div>
<div class="a" style="left:715.4px;top:481.7px;width:170.34px;height:2.6px;background:#f4a582;"></div>
<div class="a" style="left:715.4px;top:487.7px;width:113.56px;height:2.6px;background:#6a9a4a;"></div>
<div class="a" style="left:715.4px;top:493.7px;width:56.78px;height:2.6px;background:#ffe94d;"></div>
<div class="a" style="left:715.4px;top:499.7px;width:170.34px;height:2.6px;background:#6d9eeb;"></div>
<div class="a" style="left:715.4px;top:505.7px;width:113.56px;height:2.6px;background:#a9d18e;"></div>
<div class="a" style="left:715.4px;top:511.7px;width:454.24px;height:2.6px;background:#997300;"></div>
<div class="a" style="left:715.4px;top:517.7px;width:113.56px;height:2.6px;background:#ff5a1f;"></div>
<div class="a" style="left:715.4px;top:523.7px;width:170.34px;height:2.6px;background:#43682b;"></div>
<div class="a" style="left:715.4px;top:529.7px;width:227.12px;height:2.6px;background:#ffc000;"></div>
<div class="a" style="left:715.4px;top:535.7px;width:113.56px;height:2.6px;background:#4472c4;"></div>
<div class="a" style="left:715.4px;top:541.7px;width:454.24px;height:2.6px;background:#70ad47;"></div>
<div class="a" style="left:714.8px;top:454px;width:1px;height:95px;background:#bbb;"></div>
<div class="a" style="left:712.4px;top:456px;width:3px;height:0.8px;background:#bbb;"></div>
<div class="a" style="left:712.4px;top:462px;width:3px;height:0.8px;background:#bbb;"></div>
<div class="a" style="left:712.4px;top:468px;width:3px;height:0.8px;background:#bbb;"></div>
<div class="a" style="left:712.4px;top:474px;width:3px;height:0.8px;background:#bbb;"></div>
<div class="a" style="left:712.4px;top:480px;width:3px;height:0.8px;background:#bbb;"></div>
<div class="a" style="left:712.4px;top:486px;width:3px;height:0.8px;background:#bbb;"></div>
<div class="a" style="left:712.4px;top:492px;width:3px;height:0.8px;background:#bbb;"></div>
<div class="a" style="left:712.4px;top:498px;width:3px;height:0.8px;background:#bbb;"></div>
<div class="a" style="left:712.4px;top:504px;width:3px;height:0.8px;background:#bbb;"></div>
<div class="a" style="left:712.4px;top:510px;width:3px;height:0.8px;background:#bbb;"></div>
<div class="a" style="left:712.4px;top:516px;width:3px;height:0.8px;background:#bbb;"></div>
<div class="a" style="left:712.4px;top:522px;width:3px;height:0.8px;background:#bbb;"></div>
<div class="a" style="left:712.4px;top:528px;width:3px;height:0.8px;background:#bbb;"></div>
<div class="a" style="left:712.4px;top:534px;width:3px;height:0.8px;background:#bbb;"></div>
<div class="a" style="left:712.4px;top:540px;width:3px;height:0.8px;background:#bbb;"></div>
<div class="a" style="left:712.4px;top:546px;width:3px;height:0.8px;background:#bbb;"></div>
<div class="a" style="left:715.4px;top:548px;width:454.24px;height:1px;background:#e0e0e0;"></div>
<div class="t" style="left:109px;width:600px;text-align:right;top:461px;font-size:7.7px;color:#555;font-weight:400;-webkit-text-stroke:0.346px #555;">Успішне демо</div>
<div class="t" style="left:109px;width:600px;text-align:right;top:473px;font-size:7.7px;color:#555;font-weight:400;-webkit-text-stroke:0.346px #555;">Призначено повторний контакт</div>
<div class="t" style="left:109px;width:600px;text-align:right;top:485px;font-size:7.7px;color:#555;font-weight:400;-webkit-text-stroke:0.346px #555;">Повторний контакт</div>
<div class="t" style="left:109px;width:600px;text-align:right;top:497px;font-size:7.7px;color:#555;font-weight:400;-webkit-text-stroke:0.346px #555;">Очікує КП</div>
<div class="t" style="left:109px;width:600px;text-align:right;top:509px;font-size:7.7px;color:#555;font-weight:400;-webkit-text-stroke:0.346px #555;">Новий</div>
<div class="t" style="left:109px;width:600px;text-align:right;top:521px;font-size:7.7px;color:#555;font-weight:400;-webkit-text-stroke:0.346px #555;">Немає відповіді</div>
<div class="t" style="left:109px;width:600px;text-align:right;top:533px;font-size:7.7px;color:#555;font-weight:400;-webkit-text-stroke:0.346px #555;">Втрачено</div>
<div class="t" style="left:515.4px;width:400px;text-align:center;top:557px;font-size:7.8px;color:#555;font-weight:400;-webkit-text-stroke:0.35px #555;">0</div>
<div class="a" style="left:715px;top:548.6px;width:0.8px;height:3px;background:#ccc;"></div>
<div class="t" style="left:572.18px;width:400px;text-align:center;top:557px;font-size:7.8px;color:#555;font-weight:400;-webkit-text-stroke:0.35px #555;">1</div>
<div class="a" style="left:771.78px;top:548.6px;width:0.8px;height:3px;background:#ccc;"></div>
<div class="t" style="left:628.96px;width:400px;text-align:center;top:557px;font-size:7.8px;color:#555;font-weight:400;-webkit-text-stroke:0.35px #555;">2</div>
<div class="a" style="left:828.56px;top:548.6px;width:0.8px;height:3px;background:#ccc;"></div>
<div class="t" style="left:685.74px;width:400px;text-align:center;top:557px;font-size:7.8px;color:#555;font-weight:400;-webkit-text-stroke:0.35px #555;">3</div>
<div class="a" style="left:885.34px;top:548.6px;width:0.8px;height:3px;background:#ccc;"></div>
<div class="t" style="left:742.52px;width:400px;text-align:center;top:557px;font-size:7.8px;color:#555;font-weight:400;-webkit-text-stroke:0.35px #555;">4</div>
<div class="a" style="left:942.12px;top:548.6px;width:0.8px;height:3px;background:#ccc;"></div>
<div class="t" style="left:799.3px;width:400px;text-align:center;top:557px;font-size:7.8px;color:#555;font-weight:400;-webkit-text-stroke:0.35px #555;">5</div>
<div class="a" style="left:998.9px;top:548.6px;width:0.8px;height:3px;background:#ccc;"></div>
<div class="t" style="left:856.08px;width:400px;text-align:center;top:557px;font-size:7.8px;color:#555;font-weight:400;-webkit-text-stroke:0.35px #555;">6</div>
<div class="a" style="left:1055.68px;top:548.6px;width:0.8px;height:3px;background:#ccc;"></div>
<div class="t" style="left:912.86px;width:400px;text-align:center;top:557px;font-size:7.8px;color:#555;font-weight:400;-webkit-text-stroke:0.35px #555;">7</div>
<div class="a" style="left:1112.46px;top:548.6px;width:0.8px;height:3px;background:#ccc;"></div>
<div class="t" style="left:969.64px;width:400px;text-align:center;top:557px;font-size:7.8px;color:#555;font-weight:400;-webkit-text-stroke:0.35px #555;">8</div>
<div class="a" style="left:1169.24px;top:548.6px;width:0.8px;height:3px;background:#ccc;"></div>
<div class="a" style="left:0px;top:981.2px;width:1600px;height:22.8px;background:#1d4b8f;"></div>
<svg class="a" style="left:5px;top:991px;width:6px;height:8px" viewBox="0 0 3 4"><path d="M0.5 0.3L2.3 2L0.5 3.7z" fill="#fff"/></svg>
<div class="t" style="left:18px;top:989px;font-size:8.7px;color:#e9eef7;font-weight:400;-webkit-text-stroke:0.392px #e9eef7;-webkit-text-stroke:0.1px #e9eef7">Check for Issues</div>
<div class="a" style="left:90.6px;top:985px;width:1px;height:16px;background:#4a6fa8;"></div>
<div class="t" style="left:102px;top:989px;font-size:8.7px;color:#e9eef7;font-weight:400;-webkit-text-stroke:0.392px #e9eef7;-webkit-text-stroke:0.1px #e9eef7">ChartElement1</div>
<div class="a" style="left:168.6px;top:985px;width:1px;height:16px;background:#4a6fa8;"></div>
<div class="t" style="left:179px;top:989px;font-size:8.7px;color:#e9eef7;font-weight:400;-webkit-text-stroke:0.392px #e9eef7;-webkit-text-stroke:0.1px #e9eef7">X:0.00 Y:40.00 Width:380.00 Height:560.00</div>
<div class="a" style="left:354.6px;top:985px;width:1px;height:16px;background:#4a6fa8;"></div>
<div class="a" style="left:1354.6px;top:985px;width:1px;height:16px;background:#4a6fa8;"></div>
<div class="a" style="left:1434.6px;top:985px;width:1px;height:16px;background:#4a6fa8;"></div>
<svg class="a" style="left:1365px;top:988px;width:10px;height:12px" viewBox="0 0 5 6"><rect x="0.4" y="0.5" width="4.2" height="5" fill="none" stroke="#cdd9ea" stroke-width="0.5"/><path d="M0.5 2h4" stroke="#cdd9ea" stroke-width="0.5"/></svg>
<svg class="a" style="left:1390.4px;top:988px;width:10px;height:12px" viewBox="0 0 5 6"><rect x="0.4" y="0.5" width="4.2" height="5" fill="none" stroke="#cdd9ea" stroke-width="0.5"/><path d="M0.5 3h4M2.5 0.5v5" stroke="#cdd9ea" stroke-width="0.5"/></svg>
<svg class="a" style="left:1416px;top:988px;width:10px;height:12px" viewBox="0 0 5 6"><rect x="0.4" y="0.5" width="4.2" height="5" fill="none" stroke="#cdd9ea" stroke-width="0.5"/><rect x="0.5" y="1.5" width="4" height="1.5" fill="#cdd9ea"/></svg>
<div class="a" style="left:1449px;top:993.6px;width:4.4px;height:1.2px;background:#fff;"></div>
<div class="a" style="left:1467px;top:993.8px;width:72px;height:0.8px;background:#a8bcd9;"></div>
<div class="a" style="left:1500px;top:989px;width:2px;height:10px;background:#fff;"></div>
<div class="a" style="left:1553px;top:993.6px;width:5px;height:1.2px;background:#fff;"></div>
<div class="a" style="left:1554.9px;top:991.6px;width:1.2px;height:5.2px;background:#fff;"></div>
<div class="a" style="left:1569.2px;top:981px;width:30.8px;height:23px;background:#3a64a4;"></div>
<div class="t" style="left:1575px;top:989px;font-size:8px;color:#dfe7f3;font-weight:400;-webkit-text-stroke:0.36px #dfe7f3;">100%</div>
</div></body></html>
